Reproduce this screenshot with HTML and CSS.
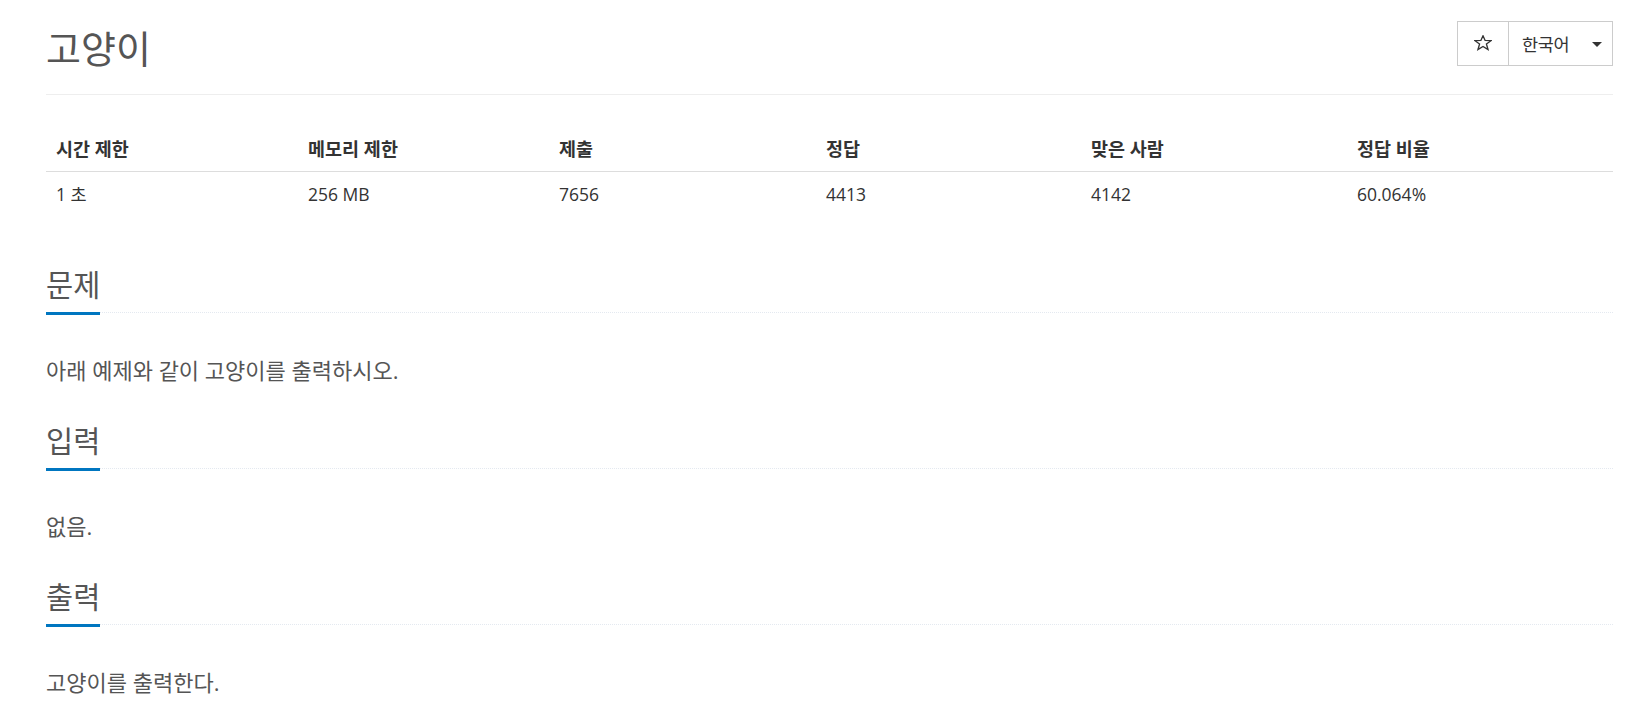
FILE: index.html
```html
<!DOCTYPE html>
<html lang="ko">
<head>
	<meta charset="utf-8">
	<title>고양이</title>
	<link rel="stylesheet" href="styles.css">
</head>
<body>
	<div class="container">
		<div class="page-header">
			<h1 class="title">고양이</h1>
			<div class="btn-group">
				<button class="btn btn-star" type="button">
					<svg class="star" viewBox="0 0 20 20" preserveAspectRatio="none">
						<polygon points="10,1 12.35,6.76 19,7.06 13.8,11.24 15.58,18.2 10,14.3 4.42,18.2 6.2,11.24 1,7.06 7.65,6.76"/>
					</svg>
				</button>
				<button class="btn btn-lang" type="button"><span>한국어</span><span class="caret"></span></button>
			</div>
		</div>

		<table class="problem-info">
			<colgroup>
				<col class="c1"><col class="c2"><col class="c3"><col class="c4"><col class="c5"><col class="c6">
			</colgroup>
			<thead>
				<tr>
					<th>시간 제한</th>
					<th>메모리 제한</th>
					<th>제출</th>
					<th>정답</th>
					<th>맞은 사람</th>
					<th>정답 비율</th>
				</tr>
			</thead>
			<tbody>
				<tr>
					<td>1 초</td>
					<td>256 MB</td>
					<td>7656</td>
					<td>4413</td>
					<td>4142</td>
					<td>60.064%</td>
				</tr>
			</tbody>
		</table>

		<section class="problem-section">
			<div class="headline"><h2>문제</h2></div>
			<div class="problem-text"><p>아래 예제와 같이 고양이를 출력하시오.</p></div>
		</section>

		<section class="problem-section">
			<div class="headline"><h2>입력</h2></div>
			<div class="problem-text"><p>없음.</p></div>
		</section>

		<section class="problem-section">
			<div class="headline"><h2>출력</h2></div>
			<div class="problem-text"><p>고양이를 출력한다.</p></div>
		</section>
	</div>
</body>
</html>
```

FILE: styles.css
```css
body {
	margin: 0;
	background: #fff;
	color: #333;
	font-family: "Open Sans", "Noto Sans CJK KR", sans-serif;
	font-size: 17.5px;
}

.container {
	padding: 0 33px 0 46px;
}

/* header */
.page-header {
	display: flex;
	justify-content: space-between;
	align-items: flex-start;
	border-bottom: 1px solid #eee;
	padding-top: 21px;
	height: 73px;
}

.title {
	margin: 7px 0 0 0;
	font-size: 38px;
	font-weight: normal;
	line-height: 40px;
	color: #555;
}

.btn-group {
	display: flex;
}

.btn {
	background: #fff;
	border: 1px solid #ccc;
	color: #333;
	font-family: "Open Sans", "Noto Sans CJK KR", sans-serif;
	height: 45px;
	margin: 0;
	cursor: pointer;
}

.btn-star {
	display: flex;
	align-items: center;
	justify-content: center;
	width: 52px;
	padding: 0 0 1px 0;
}

.star {
	width: 18px;
	height: 16px;
	fill: none;
	stroke: #333;
	stroke-width: 1.5;
	stroke-linejoin: miter;
}

.btn-lang {
	display: flex;
	align-items: center;
	width: 105px;
	margin-left: -1px;
	padding: 0 10px 0 13px;
	font-size: 17.5px;
	letter-spacing: -0.02em;
}

.caret {
	width: 0;
	height: 0;
	margin-left: auto;
	margin-top: 2px;
	border-top: 5px solid #333;
	border-left: 5px solid transparent;
	border-right: 5px solid transparent;
}

/* info table */
.problem-info {
	width: 100%;
	table-layout: fixed;
	border-collapse: collapse;
	margin-top: 31px;
	margin-bottom: 52px;
}

.c1 { width: 252px; }
.c2 { width: 251px; }
.c3 { width: 267px; }
.c4 { width: 265px; }
.c5 { width: 266px; }
.c6 { width: 266px; }

.problem-info th,
.problem-info td {
	text-align: left;
	padding: 10px;
	line-height: 25px;
}

.problem-info th {
	font-size: 18.5px;
	font-weight: bold;
	border-bottom: 1px solid #ddd;
}

/* sections */
.headline {
	border-bottom: 1px dotted #e4e9f0;
	margin-bottom: 42px;
}

.headline h2 {
	display: inline-block;
	margin: 0 0 -3px 0;
	padding-bottom: 11px;
	border-bottom: 3px solid #0076c0;
	font-size: 29.5px;
	font-weight: normal;
	line-height: 32px;
	color: #555;
}

.problem-text p {
	margin: 0 0 40px 0;
	font-size: 22px;
	line-height: 30px;
	color: #555;
}
```
